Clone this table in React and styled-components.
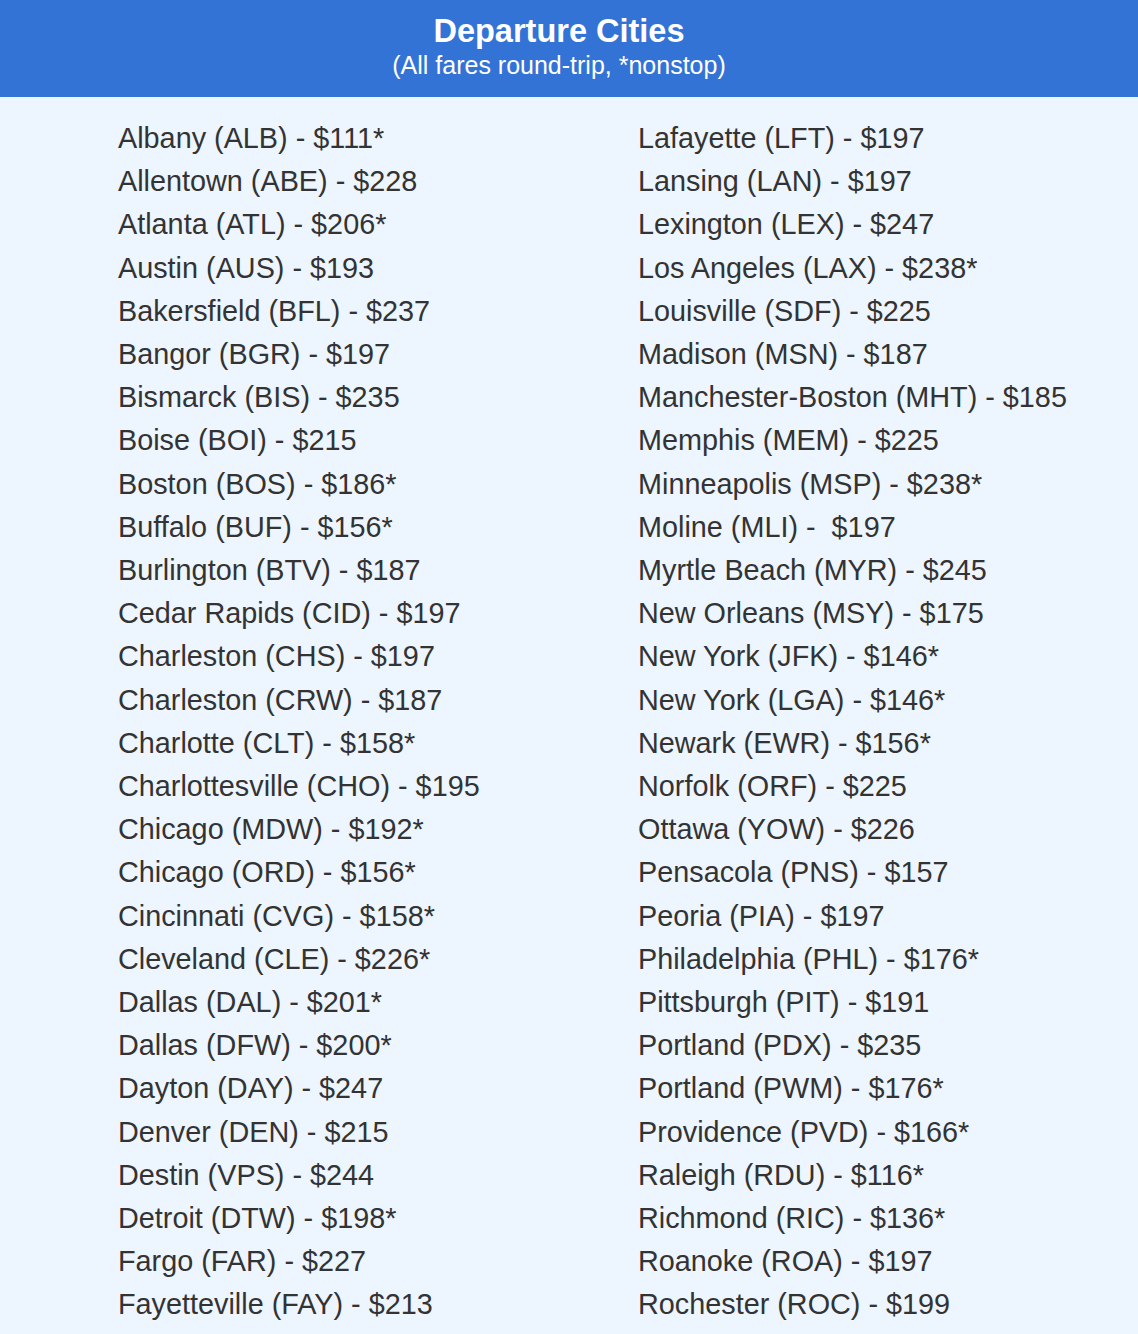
import React from "react";
import styled, { createGlobalStyle } from "styled-components";

const left = [
  "Albany (ALB) - $111*",
  "Allentown (ABE) - $228",
  "Atlanta (ATL) - $206*",
  "Austin (AUS) - $193",
  "Bakersfield (BFL) - $237",
  "Bangor (BGR) - $197",
  "Bismarck (BIS) - $235",
  "Boise (BOI) - $215",
  "Boston (BOS) - $186*",
  "Buffalo (BUF) - $156*",
  "Burlington (BTV) - $187",
  "Cedar Rapids (CID) - $197",
  "Charleston (CHS) - $197",
  "Charleston (CRW) - $187",
  "Charlotte (CLT) - $158*",
  "Charlottesville (CHO) - $195",
  "Chicago (MDW) - $192*",
  "Chicago (ORD) - $156*",
  "Cincinnati (CVG) - $158*",
  "Cleveland (CLE) - $226*",
  "Dallas (DAL) - $201*",
  "Dallas (DFW) - $200*",
  "Dayton (DAY) - $247",
  "Denver (DEN) - $215",
  "Destin (VPS) - $244",
  "Detroit (DTW) - $198*",
  "Fargo (FAR) - $227",
  "Fayetteville (FAY) - $213",
];

const right = [
  "Lafayette (LFT) - $197",
  "Lansing (LAN) - $197",
  "Lexington (LEX) - $247",
  "Los Angeles (LAX) - $238*",
  "Louisville (SDF) - $225",
  "Madison (MSN) - $187",
  "Manchester-Boston (MHT) - $185",
  "Memphis (MEM) - $225",
  "Minneapolis (MSP) - $238*",
  "Moline (MLI) -\u00a0 $197",
  "Myrtle Beach (MYR) - $245",
  "New Orleans (MSY) - $175",
  "New York (JFK) - $146*",
  "New York (LGA) - $146*",
  "Newark (EWR) - $156*",
  "Norfolk (ORF) - $225",
  "Ottawa (YOW) - $226",
  "Pensacola (PNS) - $157",
  "Peoria (PIA) - $197",
  "Philadelphia (PHL) - $176*",
  "Pittsburgh (PIT) - $191",
  "Portland (PDX) - $235",
  "Portland (PWM) - $176*",
  "Providence (PVD) - $166*",
  "Raleigh (RDU) - $116*",
  "Richmond (RIC) - $136*",
  "Roanoke (ROA) - $197",
  "Rochester (ROC) - $199",
];

function App() {
  return (
    <>
      <GlobalStyle />
      <Page>
        <Header>
          <Title>Departure Cities</Title>
          <Subtitle>(All fares round-trip, *nonstop)</Subtitle>
        </Header>
        <Columns>
          <CityList>
            {left.map((c) => (
              <City key={c}>{c}</City>
            ))}
          </CityList>
          <CityList>
            {right.map((c) => (
              <City key={c}>{c}</City>
            ))}
          </CityList>
        </Columns>
      </Page>
    </>
  );
}

const GlobalStyle = createGlobalStyle`
  html, body {
    margin: 0;
    padding: 0;
    background: #edf5fe;
  }
`;

const Page = styled.div`
  min-height: 1334px;
  background: #edf5fe;
  font-family: "Liberation Sans", Arial, Helvetica, sans-serif;
  color: #333333;
`;

const Header = styled.header`
  height: 97px;
  box-sizing: border-box;
  background: #3373d6;
  color: #ffffff;
  text-align: center;
  padding: 13px 20px 0 0;
`;

const Title = styled.h1`
  margin: 0;
  font-size: 32.5px;
  line-height: 36px;
  font-weight: bold;
`;

const Subtitle = styled.p`
  margin: 0;
  font-size: 25px;
  line-height: 33px;
`;

const Columns = styled.div`
  display: grid;
  grid-template-columns: 520px 1fr;
  padding: 20px 0 0 118px;
`;

const CityList = styled.ul`
  list-style: none;
  margin: 0;
  padding: 0;
`;

const City = styled.li`
  font-size: 28.8px;
  line-height: 43.2px;
  white-space: pre;
`;

export default App;
